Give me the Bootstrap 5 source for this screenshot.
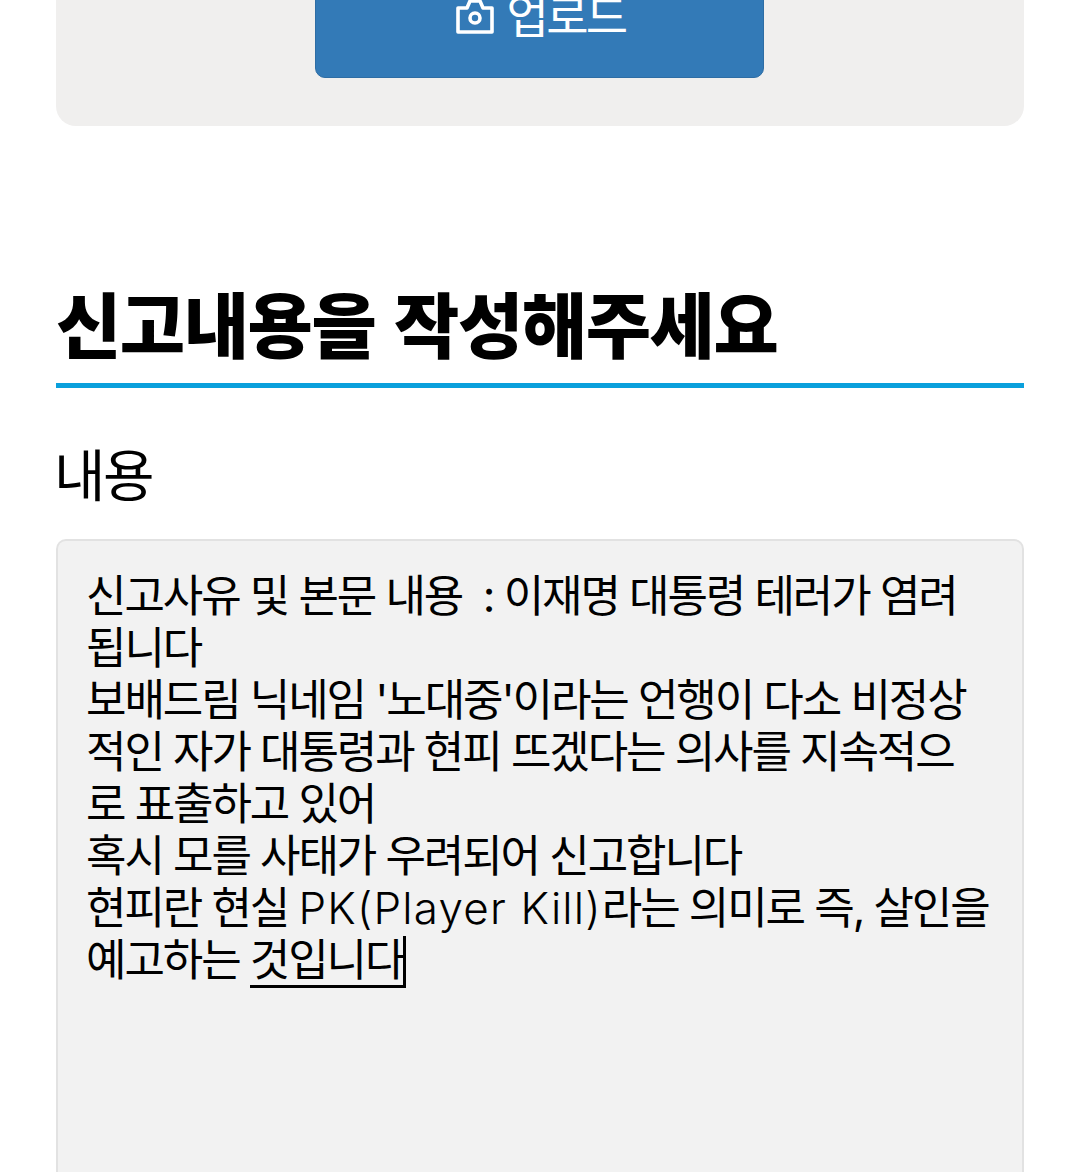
<!DOCTYPE html>
<html lang="ko"><head><meta charset="utf-8">
<link href="https://cdn.jsdelivr.net/npm/bootstrap@5.3.0/dist/css/bootstrap.min.css" rel="stylesheet">
<style>
html,body{height:1173px;overflow:hidden;background:#fff}
body{font-family:Inter,"Noto Sans CJK KR","Noto Sans",sans-serif;color:#000}
.pg{padding:0 56px}
.upbox{background:#f0efee;border-radius:0 0 20px 20px;height:126px;display:flex;justify-content:center;align-items:flex-end;padding:0 2px 48px 0}
.upbtn{width:449px;height:124px;flex:none;background:#337ab7;border:1px solid #2e6da4;border-radius:0 0 10px 10px;color:#fff;font-size:46px;line-height:1;letter-spacing:-2.6px;display:flex;align-items:center;justify-content:center;gap:11px;padding:0 0 0 3px}
.upbtn svg{width:40px;height:40px}
.hd{font-size:71px;font-weight:900;letter-spacing:-1.45px;word-spacing:6px;line-height:1;margin:165px 0 0;padding:0 0 21px;border-bottom:5px solid #0aa0dc}
.lb{font-size:56px;letter-spacing:-2.6px;font-weight:400;line-height:1;margin:60px 0 35px -2px}
.ta{background:#f2f2f2;border:2px solid #e2e2e2;border-bottom:0;border-radius:10px 10px 0 0;height:633px;padding:29px 33px 0 28px;font-size:44px;line-height:52px;letter-spacing:-2.1px}
.lat{letter-spacing:1.2px;font-weight:300}
.ul{display:inline-block;line-height:49px;border-bottom:3px solid #000;border-right:3px solid #000}
</style></head><body>
<div class="pg">
<div class="upbox"><button class="upbtn btn"><svg viewBox="0 0 40 40" fill="none" stroke="#fff" stroke-width="3.6"><path d="M3 12h9l3-7h10l3 7h9v24H3z" stroke-linejoin="round"/><circle cx="20" cy="22" r="5"/></svg><span>업로드</span></button></div>
<h2 class="hd">신고내용을 작성해주세요</h2>
<div class="lb">내용</div>
<div class="ta">신고사유 및 본문 내용 &nbsp;: 이재명 대통령 테러가 염려됩니다<br>보배드림 닉네임 '노대중'이라는 언행이 다소 비정상적인 자가 대통령과 현피 뜨겠다는 의사를 지속적으로 표출하고 있어<br>혹시 모를 사태가 우려되어 신고합니다<br>현피란 현실 <span class="lat">PK(Player Kill)</span>라는 의미로 즉, 살인을 예고하는 <span class="ul">것입니다</span></div>
</div>
</body></html>
